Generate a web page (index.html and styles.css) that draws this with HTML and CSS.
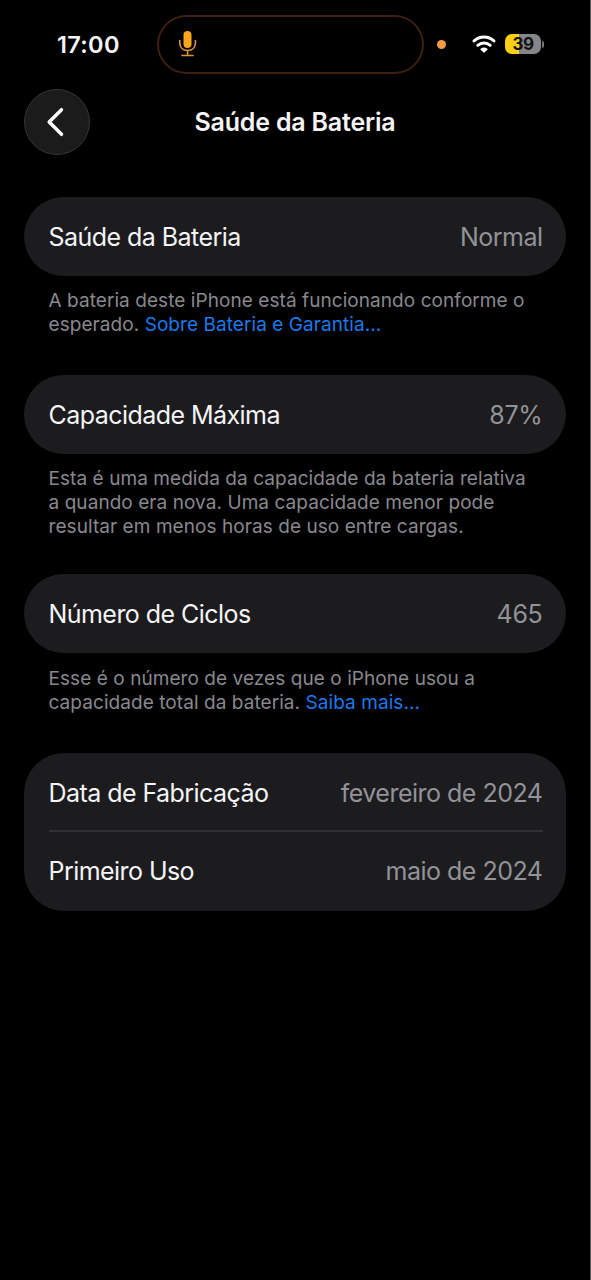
FILE: index.html
```html
<!DOCTYPE html>
<html lang="pt-BR">
<head>
<meta charset="utf-8">
<title>Saúde da Bateria</title>
<link rel="stylesheet" href="styles.css">
</head>
<body>
<div class="screen">
  <div class="status">
    <span class="time">17:00</span>
    <div class="island">
      <svg width="20" height="28" viewBox="0 0 20 28"><rect x="5.500" y="1" width="8" height="17" rx="4" fill="#fba51d"/><path d="M1.800 10.500v2.500c0 4.500 3.200 7.500 7.800 7.500s7.800-3 7.800-7.500v-2.500M9.600 20.500v5M4 25.500h11" fill="none" stroke="#df923f" stroke-width="1.600" stroke-linecap="round"/></svg>
    </div>
    <span class="dot"></span>
    <svg class="wifi" width="24" height="18" viewBox="0 0 24 18"><path d="M2 6a14.500 14.500 0 0 1 20 0M5.800 10.300a9.300 9.300 0 0 1 12.400 0" fill="none" stroke="#fff" stroke-width="2.900" stroke-linecap="round"/><path d="M9 14.200a5 5 0 0 1 6 0L12 17z" fill="#fff" stroke="#fff" stroke-width="1.200" stroke-linejoin="round"/></svg>
    <span class="battery"><span class="level">39</span></span><span class="cap"></span>
  </div>
  <header class="nav">
    <div class="back"><svg width="20" height="30" viewBox="0 0 20 30"><path d="M15.500 2.700L3.200 15l12.300 12.300" fill="none" stroke="#fff" stroke-width="3.500" stroke-linecap="round" stroke-linejoin="round"/></svg></div>
    <h1 class="title">Saúde da Bateria</h1>
  </header>
  <main class="list">
    <section class="group health">
      <div class="card"><div class="row"><span>Saúde da Bateria</span><span class="value">Normal</span></div></div>
      <p class="note">A bateria deste iPhone está funcionando conforme o<br>esperado. <a class="link">Sobre Bateria e Garantia...</a></p>
    </section>
    <section class="group capacity">
      <div class="card"><div class="row"><span>Capacidade Máxima</span><span class="value number">87%</span></div></div>
      <p class="note">Esta é uma medida da capacidade da bateria relativa<br>a quando era nova. Uma capacidade menor pode<br>resultar em menos horas de uso entre cargas.</p>
    </section>
    <section class="group cycles">
      <div class="card"><div class="row"><span>Número de Ciclos</span><span class="value number">465</span></div></div>
      <p class="note">Esse é o número de vezes que o iPhone usou a<br>capacidade total da bateria. <a class="link">Saiba mais...</a></p>
    </section>
    <section class="group">
      <div class="card"><div class="row first"><span>Data de Fabricação</span><span class="value">fevereiro de 2024</span></div><div class="row second"><span>Primeiro Uso</span><span class="value">maio de 2024</span></div></div>
    </section>
  </main>
</div>
</body>
</html>
```
FILE: styles.css
```css
* { box-sizing: border-box; }
body { margin: 0; background: #000; color: #f5f5f7; font-family: Inter, sans-serif; }
svg { display: block; }
.screen { width: 591px; height: 1280px; overflow: hidden; background: #000; border-right: 1px solid #5c5f60; }
.status { display: flex; align-items: center; height: 88px; padding-left: 57px; }
.time { width: 100px; font-size: 23.500px; font-weight: 600; letter-spacing: .3px; }
.island { width: 267px; height: 59px; border: 2px solid #3d200e; border-radius: 30px; display: flex; align-items: center; padding-left: 18.500px; }
.dot { width: 9px; height: 9px; border-radius: 50%; background: #f39a42; margin-left: 13px; }
.wifi { margin-left: 26px; }
.battery { width: 36px; height: 20px; margin-left: 9px; border-radius: 7px; background: linear-gradient(90deg, #fdd016 39%, #85858a 39%); display: flex; justify-content: center; align-items: center; }
.level { color: #111; font-size: 17px; font-weight: 700; letter-spacing: -.5px; }
.cap { width: 2px; height: 7px; margin-left: 1px; border-radius: 0 2px 2px 0; background: #77777b; }
.nav { display: grid; grid-template-columns: 66px 1fr 66px; height: 68px; padding: 1px 24px; align-items: center; }
.back { width: 66px; height: 66px; border-radius: 50%; background: #1b1b1c; border: 1px solid #353538; display: flex; align-items: center; justify-content: center; padding-right: 2px; }
.title { margin: 0; text-align: center; font-size: 25px; font-weight: 600; letter-spacing: -.2px; }
.list { padding: 41px 24px 0; }
.card { background: #1c1c1e; border-radius: 40px; padding: 0 23.500px 0 24.500px; }
.row { height: 79px; display: flex; align-items: center; justify-content: space-between; font-size: 25px; letter-spacing: -.55px; }
.value { color: #929298; letter-spacing: -.5px; }
.number { letter-spacing: -.3px; }
.first { height: 77px; padding-top: 2px; }
.second { height: 81px; border-top: 2px solid #303033; padding-bottom: 1px; }
.note { margin: 0; padding: 13px 0 0 24.500px; font-size: 19px; line-height: 24px; letter-spacing: .065px; color: #88888d; white-space: nowrap; }
.link { color: #1b79ea; }
.health { height: 178px; }
.capacity { height: 199px; }
.cycles { height: 179px; }
.cycles .note { padding-top: 14px; }
```
